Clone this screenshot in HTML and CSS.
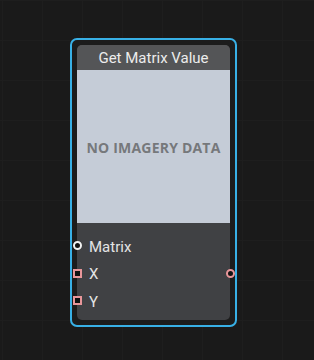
FILE: index.html
```html
<!DOCTYPE html>
<html>
<head>
<meta charset="utf-8">
<link rel="stylesheet" href="styles.css">
</head>
<body>
<div class="canvas">
  <div class="node selected">
    <div class="node-inner">
      <div class="node-title">Get Matrix Value</div>
      <div class="preview"><span class="no-data">NO IMAGERY DATA</span></div>
      <div class="ports">
        <div class="port">
          <span class="pin pin-in pin-circle pin-white"></span>
          <span class="port-label">Matrix</span>
        </div>
        <div class="port">
          <span class="pin pin-in pin-square"></span>
          <span class="port-label">X</span>
          <span class="pin pin-out pin-circle pin-pink"></span>
        </div>
        <div class="port">
          <span class="pin pin-in pin-square"></span>
          <span class="port-label">Y</span>
        </div>
      </div>
    </div>
  </div>
</div>
</body>
</html>
```
FILE: styles.css
```css
html, body {
  margin: 0;
  padding: 0;
  width: 314px;
  height: 360px;
  overflow: hidden;
  background: #1a1a1a;
  font-family: Roboto, "Liberation Sans", sans-serif;
}
.canvas {
  position: relative;
  width: 314px;
  height: 360px;
  background-color: #1a1a1a;
  background-image:
    linear-gradient(to right, #1e1e1e 1px, transparent 1px),
    linear-gradient(to bottom, #1e1e1e 1px, transparent 1px);
  background-size: 40px 40px;
  background-position: 2px 0;
}
.node {
  position: absolute;
  left: 70px;
  top: 38px;
  box-sizing: border-box;
  width: 167px;
  height: 289px;
  border: 2px solid #38b0e6;
  border-radius: 7px;
  padding: 5px;
  background: #1c1c1c;
}
.node-inner {
  display: flex;
  flex-direction: column;
  height: 275px;
  border-radius: 5px;
  background: #404144;
}
.node-title {
  height: 25px;
  line-height: 27px;
  background: #545557;
  border-radius: 5px 5px 0 0;
  color: #ececec;
  font-size: 15px;
  text-align: center;
}
.preview {
  height: 153px;
  background: #c5ccd7;
  display: flex;
  align-items: center;
  justify-content: center;
}
.no-data {
  font-family: "Open Sans", "DejaVu Sans", sans-serif;
  font-weight: 700;
  font-size: 14px;
  color: #76787b;
  letter-spacing: 0.2px;
  margin-top: 1px;
}
.ports {
  flex: 1;
  padding-top: 9px;
  display: flex;
  flex-direction: column;
}
.port {
  position: relative;
  height: 27.5px;
  display: flex;
  align-items: center;
  padding-left: 12px;
}
.port-label {
  color: #e4e4e4;
  font-size: 15px;
  line-height: 16px;
  margin-top: 2px;
}
.pin {
  position: absolute;
  top: 50%;
  box-sizing: border-box;
  width: 9px;
  height: 9px;
  margin-top: -4.5px;
  background: #111;
}
.pin-in { left: -4.5px; }
.pin-out { right: -4.5px; }
.pin-circle { border-radius: 50%; border: 2px solid #fff; }
.pin-white { border-color: #f2f2f2; }
.pin-pink { border-color: #e8969a; }
.pin-square { border: 2px solid #e8969a; }
```
